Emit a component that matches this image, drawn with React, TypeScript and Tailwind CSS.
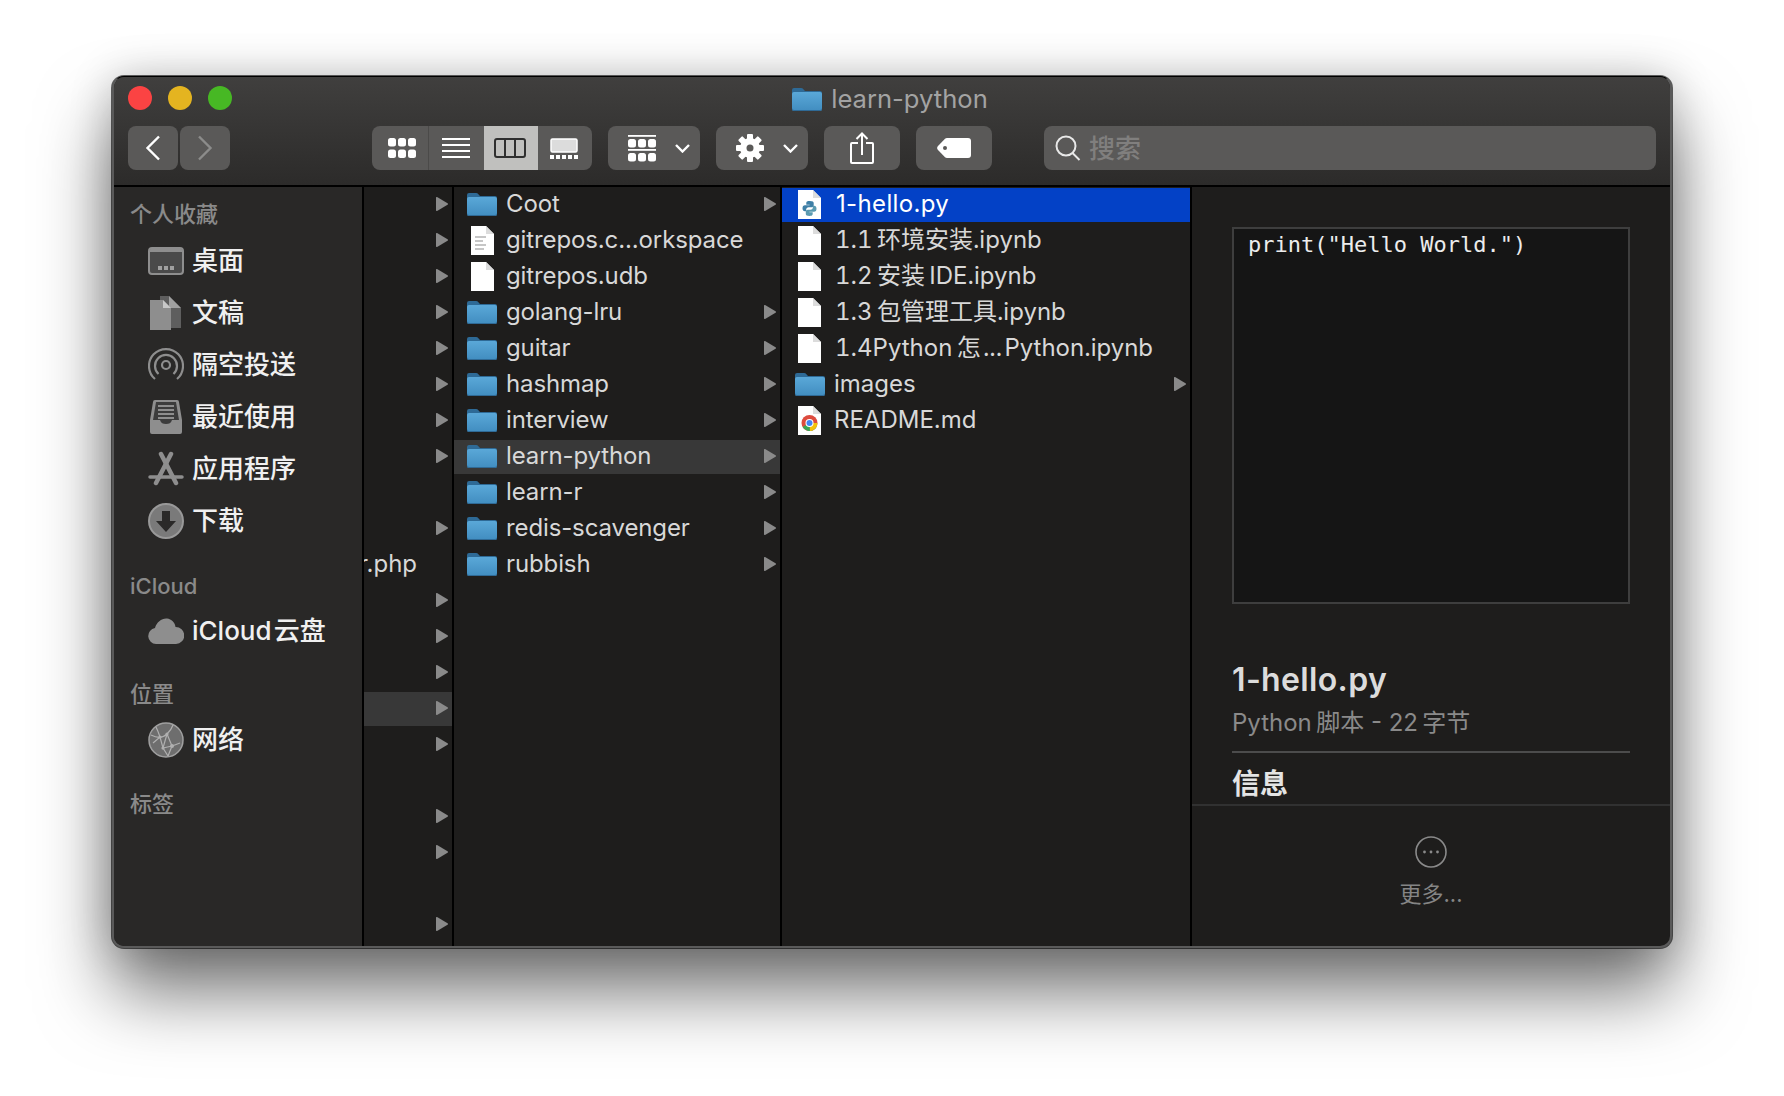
import type { ReactNode } from "react";

function Folder() {
  return (
    <svg width="30" height="24" viewBox="0 0 30 24" className="shrink-0">
      <defs>
        <linearGradient id="folderBody" x1="0" y1="0" x2="0" y2="1">
          <stop offset="0" stopColor="#5aa8d8" />
          <stop offset="1" stopColor="#418dc0" />
        </linearGradient>
      </defs>
      <path d="M0 3a2 2 0 0 1 2-2h7a3 3 0 0 1 2.4 1.2L13 4h15a2 2 0 0 1 2 2v4H0z" fill="#2e6a96" />
      <path d="M0 7a2 2 0 0 1 2-2h26a2 2 0 0 1 2 2v15a2 2 0 0 1-2 2H2a2 2 0 0 1-2-2z" fill="url(#folderBody)" />
      <path d="M0 22v-1a2 2 0 0 0 2 2h26a2 2 0 0 0 2-2v1a2 2 0 0 1-2 2H2a2 2 0 0 1-2-2z" fill="#2f6a96" />
    </svg>
  );
}

function Page({ children }: { children?: ReactNode }) {
  return (
    <svg width="23" height="29" viewBox="0 0 23 29" className="shrink-0">
      <path d="M0 0h15l8 8v21H0z" fill="#ffffff" />
      <path d="M15 0l8 8h-8z" fill="#dcdcdc" />
      {children}
    </svg>
  );
}

function DocFile() {
  return (
    <Page>
      <path d="M4 11h11M4 15h8M4 19h11M4 23h9" stroke="#b4b4b4" strokeWidth="1.4" />
    </Page>
  );
}

function PythonFile() {
  return (
    <Page>
      <path d="M11.3 11c-3 0-3 1.300-3 2.400v1.300h3.300v.6H7c-1.600 0-2.500 1.200-2.500 3s.9 3 2.400 3h1.300v-1.800c0-1.300 1.100-2.300 2.400-2.300h3.200c1.100 0 1.900-.9 1.900-2v-2.200c0-1.100-1-2-3.900-2z" fill="#3f7fa6" />
      <path d="M11.700 26c3 0 3-1.300 3-2.400v-1.300h-3.300v-.6H16c1.600 0 2.500-1.200 2.500-3s-.9-3-2.400-3h-1.300v1.800c0 1.300-1.100 2.300-2.400 2.300H9.700c-1.100 0-1.900.9-1.900 2v2.200c0 1.100 1 2 3.900 2z" fill="#5b9ab0" />
    </Page>
  );
}

function ChromeFile() {
  return (
    <Page>
      <circle cx="11.500" cy="17" r="8" fill="#dd4b3e" />
      <path d="M11.500 17L4.600 21a8 8 0 0 0 10.900 2.900 8 8 0 0 0 3-2.900z" fill="#3aa757" />
      <path d="M11.500 17h8a8 8 0 0 1-4 6.900 8 8 0 0 1-3.500 1.100z" fill="#f4c20d" />
      <circle cx="11.500" cy="17" r="4" fill="#ffffff" />
      <circle cx="11.500" cy="17" r="3" fill="#4285f4" />
    </Page>
  );
}

function Arrow() {
  return (
    <svg width="12" height="14" viewBox="0 0 12 14" className="shrink-0">
      <path d="M0 1v12a1 1 0 0 0 1.500.8l10-6a1 1 0 0 0 0-1.600l-10-6A1 1 0 0 0 0 1z" fill="#8a8a8a" />
    </svg>
  );
}

function Chevron() {
  return (
    <svg width="15" height="9" viewBox="0 0 15 9" className="shrink-0">
      <path d="M1 1l6.500 6.500L14 1" fill="none" stroke="#ffffff" strokeWidth="2.400" />
    </svg>
  );
}

function DesktopIcon() {
  return (
    <svg width="36" height="36" viewBox="0 0 36 36">
      <rect x="1" y="5" width="34" height="26" rx="3" fill="#4a4a4a" stroke="#8e8e8e" strokeWidth="2" />
      <path d="M2 7a2 2 0 0 1 2-2h28a2 2 0 0 1 2 2v2H2z" fill="#8e8e8e" />
      <rect x="10" y="23" width="4" height="4" fill="#a0a0a0" />
      <rect x="16" y="23" width="4" height="4" fill="#a0a0a0" />
      <rect x="22" y="23" width="4" height="4" fill="#a0a0a0" />
    </svg>
  );
}

function DocsIcon() {
  return (
    <svg width="36" height="36" viewBox="0 0 36 36">
      <path d="M12 1h9l12 12v20H12z" fill="#5e5e5e" />
      <path d="M21 1l12 12H21z" fill="#a0a0a0" />
      <path d="M2 5h13l8 8v22H2z" fill="#8e8e8e" />
      <path d="M15 5l8 8h-8z" fill="#c8c8c8" />
    </svg>
  );
}

function AirdropIcon() {
  return (
    <svg width="36" height="36" viewBox="0 0 36 36" fill="none" stroke="#8e8e8e" strokeWidth="2.200">
      <path d="M7 32a17 17 0 1 1 22 0" />
      <path d="M10.500 27a11 11 0 1 1 15 0" />
      <circle cx="18" cy="18" r="4" />
    </svg>
  );
}

function RecentsIcon() {
  return (
    <svg width="36" height="36" viewBox="0 0 36 36">
      <path d="M7 1h22a2 2 0 0 1 2 2l3 18v12a2 2 0 0 1-2 2H4a2 2 0 0 1-2-2V21L5 3a2 2 0 0 1 2-2z" fill="#8e8e8e" />
      <path d="M8 3h20l3 18h-7c-1 3-3 4-6 4s-5-1-6-4H5z" fill="#3c3c3c" />
      <path d="M10 7h16M10 11h16M10 15h16M10 19h16" stroke="#8e8e8e" strokeWidth="2" />
    </svg>
  );
}

function AppsIcon() {
  return (
    <svg width="36" height="36" viewBox="0 0 36 36" fill="none" stroke="#8e8e8e" strokeLinecap="round">
      <path d="M13 3l15 29" strokeWidth="4.500" />
      <path d="M23 3L8 32" strokeWidth="4.500" />
      <path d="M2 26h32" strokeWidth="3.500" />
    </svg>
  );
}

function DownloadIcon() {
  return (
    <svg width="36" height="36" viewBox="0 0 36 36">
      <circle cx="18" cy="18" r="17" fill="#7a7a7a" stroke="#999999" strokeWidth="2" />
      <path d="M14 8h8v10h6L18 29 8 18h6z" fill="#2a2928" />
    </svg>
  );
}

function CloudIcon() {
  return (
    <svg width="36" height="26" viewBox="0 0 36 26">
      <path d="M8 26a8 8 0 0 1-1-15.900C8.500 4 14 0 19 .500c4.500.5 8 4 8.500 8.500A8.500 8.500 0 0 1 28 26z" fill="#8e8e8e" />
    </svg>
  );
}

function NetworkIcon() {
  return (
    <svg width="36" height="36" viewBox="0 0 36 36">
      <circle cx="18" cy="18" r="17" fill="#6e6e6e" stroke="#a0a0a0" strokeWidth="1.500" />
      <g fill="none" stroke="#b0b0b0" strokeWidth="1.200">
        <path d="M3 13c6 3 12 3 16-1 3-3 5-6 6-9" />
        <path d="M19 12l-4 14-3-11-7 6" />
        <path d="M19 12l5 12 8-3" />
        <path d="M15 26l9-2-4 10" />
        <path d="M15 26l5 8" />
        <path d="M8 5c2 4 3 7 4 10" />
      </g>
      <g fill="#b0b0b0">
        <circle cx="19" cy="12" r="1.600" />
        <circle cx="15" cy="26" r="1.600" />
        <circle cx="24" cy="24" r="2" />
        <circle cx="12" cy="15" r="1.600" />
      </g>
    </svg>
  );
}

function SectionHeader({ label, className }: { label: string; className: string }) {
  return (
    <div className={`h-[28px] pl-[16px] flex items-center text-[22px] font-medium text-[#8a8a8a] ${className}`}>{label}</div>
  );
}

function SideRow({ icon, label, className = "" }: { icon: ReactNode; label: string; className?: string }) {
  return (
    <div className={`h-[52px] pl-[34px] flex items-center text-[26px] font-medium text-[#f0f0f0] ${className}`}>
      <div className="w-[36px] h-[36px] flex items-center justify-center">{icon}</div>
      <span className="ml-[8px] mb-[2px] whitespace-nowrap">{label}</span>
    </div>
  );
}

// second column is only arrows, the names are scrolled out of view
const parentRows = [
  "arrow", "arrow", "arrow", "arrow", "arrow", "arrow", "arrow", "arrow", "",
  "arrow", "php", "arrow", "arrow", "arrow", "selected", "arrow", "", "arrow", "arrow", "", "arrow",
];

const repoRows = [
  { name: "Coot", kind: "folder" },
  { name: "gitrepos.c...orkspace", kind: "doc" },
  { name: "gitrepos.udb", kind: "file" },
  { name: "golang-lru", kind: "folder" },
  { name: "guitar", kind: "folder" },
  { name: "hashmap", kind: "folder" },
  { name: "interview", kind: "folder" },
  { name: "learn-python", kind: "folder", active: true },
  { name: "learn-r", kind: "folder" },
  { name: "redis-scavenger", kind: "folder" },
  { name: "rubbish", kind: "folder" },
];

const pythonRows = [
  { name: "1.1\u2009环境安装.ipynb" },
  { name: "1.2\u2009安装\u2009IDE.ipynb" },
  { name: "1.3\u2009包管理工具.ipynb" },
  { name: "1.4Python\u2009怎\u200a...\u200aPython.ipynb" },
];

export default function App() {
  return (
    <div className="h-[1096px] w-[1784px] overflow-hidden bg-white pt-[76px] pl-[112px] font-[Inter,'Noto_Sans_CJK_SC',sans-serif]">
      <div className="w-[1560px] h-[872px] flex flex-col overflow-hidden rounded-[12px] border-x-2 border-b-2 border-t border-x-[#5a5a5a] border-b-[#5a5a5a] border-t-black bg-[#1e1d1c] shadow-[0_44px_72px_rgba(0,0,0,0.55),0_0_44px_rgba(0,0,0,0.2),0_0_0_1px_rgba(0,0,0,0.6)]">
        {/* toolbar */}
        <div className="h-[110px] shrink-0 border-b-2 border-black bg-gradient-to-b from-[#403f3e] to-[#2c2b2a]">
          <div className="h-[42px] pl-[14px] grid grid-cols-[1fr_auto_1fr] items-center">
            <div className="flex gap-[16px]">
              <div className="w-[24px] h-[24px] rounded-full bg-[#fb4343]" />
              <div className="w-[24px] h-[24px] rounded-full bg-[#e4b420]" />
              <div className="w-[24px] h-[24px] rounded-full bg-[#47b824]" />
            </div>
            <div className="flex items-center gap-[9px] text-[25.6px] text-[#a3a3a3] pr-[18px] pt-[2px]">
              <Folder />
              <span>learn-python</span>
            </div>
            <div />
          </div>
          <div className="mt-[7px] h-[44px] px-[14px] flex">
            <div className="w-[50px] rounded-[8px] bg-[#5a5958] flex items-center justify-center">
              <svg width="16" height="26" viewBox="0 0 16 26" fill="none" stroke="#ffffff" strokeWidth="2.400">
                <path d="M14 1.500L2.500 13 14 24.500" />
              </svg>
            </div>
            <div className="ml-[2px] w-[50px] rounded-[8px] bg-[#5a5958] flex items-center justify-center">
              <svg width="16" height="26" viewBox="0 0 16 26" fill="none" stroke="#8c8c8b" strokeWidth="2.400">
                <path d="M2 1.500L13.500 13 2 24.500" />
              </svg>
            </div>

            <div className="ml-[142px] w-[220px] flex rounded-[8px] overflow-hidden bg-[#5a5958]">
              <div className="w-[57px] pl-[3px] border-r border-[#4b4a49] flex items-center justify-center">
                <svg width="28" height="20" viewBox="0 0 28 20" fill="#ffffff">
                  <rect x="0" y="0" width="8" height="8.500" rx="2.500" />
                  <rect x="10" y="0" width="8" height="8.500" rx="2.500" />
                  <rect x="20" y="0" width="8" height="8.500" rx="2.500" />
                  <rect x="0" y="11.500" width="8" height="8.500" rx="2.500" />
                  <rect x="10" y="11.500" width="8" height="8.500" rx="2.500" />
                  <rect x="20" y="11.500" width="8" height="8.500" rx="2.500" />
                </svg>
              </div>
              <div className="w-[55px] pr-[2px] flex items-center justify-center">
                <svg width="28" height="20" viewBox="0 0 28 20" stroke="#ffffff" strokeWidth="1.800">
                  <path d="M0 1h28M0 7h28M0 13h28M0 19h28" />
                </svg>
              </div>
              <div className="w-[54px] pr-[2px] bg-[#c0c0be] flex items-center justify-center">
                <svg width="32" height="20" viewBox="0 0 32 20" fill="none" stroke="#2f2f2f" strokeWidth="2">
                  <rect x="1" y="1" width="30" height="18" rx="2" />
                  <path d="M11 1v18M21 1v18" />
                </svg>
              </div>
              <div className="w-[54px] pr-[2px] flex items-center justify-center">
                <svg width="28" height="21" viewBox="0 0 28 21">
                  <rect x="1" y="1" width="26" height="13" rx="1.500" fill="#dcdcdc" stroke="#ffffff" strokeWidth="1.500" />
                  <g fill="#ffffff">
                    <rect x="0" y="17" width="4" height="4" />
                    <rect x="6" y="17" width="4" height="4" />
                    <rect x="12" y="17" width="4" height="4" />
                    <rect x="18" y="17" width="4" height="4" />
                    <rect x="24" y="17" width="4" height="4" />
                  </g>
                </svg>
              </div>
            </div>

            <div className="ml-[16px] w-[92px] rounded-[8px] bg-[#5a5958] flex items-center pl-[20px]">
              <svg width="28" height="27" viewBox="0 0 28 27" fill="#ffffff" className="shrink-0">
                <rect x="0" y="0" width="28" height="1.800" />
                <rect x="0" y="4" width="8" height="8.500" rx="2.500" />
                <rect x="10" y="4" width="8" height="8.500" rx="2.500" />
                <rect x="20" y="4" width="8" height="8.500" rx="2.500" />
                <rect x="0" y="14" width="28" height="1.800" />
                <rect x="0" y="18" width="8" height="8.500" rx="2.500" />
                <rect x="10" y="18" width="8" height="8.500" rx="2.500" />
                <rect x="20" y="18" width="8" height="8.500" rx="2.500" />
              </svg>
              <div className="ml-[19px]">
                <Chevron />
              </div>
            </div>

            <div className="ml-[16px] w-[92px] rounded-[8px] bg-[#5a5958] flex items-center pl-[20px]">
              <svg width="28" height="28" viewBox="0 0 28 28" fill="#ffffff" className="shrink-0">
                <g>
                  {[0, 45, 90, 135, 180, 225, 270, 315].map((a) => (
                    <rect key={a} x="11" y="0" width="6" height="8" rx="1" transform={`rotate(${a} 14 14)`} />
                  ))}
                </g>
                <circle cx="14" cy="14" r="10" />
                <circle cx="14" cy="14" r="3.500" fill="#5a5958" />
              </svg>
              <div className="ml-[19px]">
                <Chevron />
              </div>
            </div>

            <div className="ml-[16px] w-[76px] rounded-[8px] bg-[#5a5958] flex items-center justify-center">
              <svg width="24" height="32" viewBox="0 0 24 32" fill="none" stroke="#ffffff" strokeWidth="2">
                <path d="M8 11H2a1 1 0 0 0-1 1v18a1 1 0 0 0 1 1h20a1 1 0 0 0 1-1V12a1 1 0 0 0-1-1h-6" />
                <path d="M12 23V2M6.500 7L12 1.500 17.500 7" />
              </svg>
            </div>

            <div className="ml-[16px] w-[76px] rounded-[8px] bg-[#5a5958] flex items-center justify-center">
              <svg width="34" height="20" viewBox="0 0 34 20">
                <path d="M10 0h21a3 3 0 0 1 3 3v14a3 3 0 0 1-3 3H10a3 3 0 0 1-2-.8L1 12a3 3 0 0 1 0-4l7-7.200A3 3 0 0 1 10 0z" fill="#ffffff" />
                <circle cx="8" cy="10" r="2" fill="#5a5958" />
              </svg>
            </div>

            <div className="ml-[52px] flex-1 rounded-[8px] bg-[#5a5958] flex items-center pl-[11px]">
              <svg width="26" height="26" viewBox="0 0 26 26" fill="none" stroke="#e8e8e8" strokeWidth="2" className="shrink-0">
                <circle cx="11" cy="11" r="9.500" />
                <path d="M17.500 18l7 7" />
              </svg>
              <span className="ml-[8px] text-[26px] font-medium text-[#807f7e]">搜索</span>
            </div>
          </div>
        </div>

        <div className="flex-1 min-h-0 flex">
          {/* sidebar */}
          <div className="w-[250px] shrink-0 border-r-2 border-black bg-[#292827]">
            <SectionHeader label="个人收藏" className="mt-[13px]" />
            <SideRow icon={<DesktopIcon />} label="桌面" className="mt-[7px]" />
            <SideRow icon={<DocsIcon />} label="文稿" />
            <SideRow icon={<AirdropIcon />} label="隔空投送" />
            <SideRow icon={<RecentsIcon />} label="最近使用" />
            <SideRow icon={<AppsIcon />} label="应用程序" />
            <SideRow icon={<DownloadIcon />} label="下载" />
            <SectionHeader label="iCloud" className="mt-[25px]" />
            <SideRow icon={<CloudIcon />} label={"iCloud\u200a云盘"} className="mt-[5px]" />
            <SectionHeader label="位置" className="mt-[23px]" />
            <SideRow icon={<NetworkIcon />} label="网络" className="mt-[6px]" />
            <SectionHeader label="标签" className="mt-[24px]" />
          </div>

          {/* parent column */}
          <div className="w-[90px] shrink-0 border-r-2 border-black pt-px">
            {parentRows.map((r, i) => (
              <div
                key={i}
                className={`h-[34px] mb-[2px] pr-[4px] pb-[2px] flex items-center justify-end overflow-hidden ${r === "selected" ? "bg-[#383838]" : ""}`}
              >
                {r === "php" ? <span className="mr-auto -ml-[5px] text-[24px] text-[#d8d8d8] whitespace-nowrap">r.php</span> : null}
                {r === "arrow" || r === "selected" ? <Arrow /> : null}
              </div>
            ))}
          </div>

          {/* repo column */}
          <div className="w-[328px] shrink-0 border-r-2 border-black pt-px">
            {repoRows.map((r) => (
              <div
                key={r.name}
                className={`h-[34px] mb-[2px] pl-[13px] pr-[4px] pb-[2px] flex items-center text-[24px] text-[#d8d8d8] ${r.active ? "bg-[#383838]" : ""}`}
              >
                <div className="w-[30px] flex justify-center shrink-0">
                  {r.kind === "folder" ? <Folder /> : r.kind === "doc" ? <DocFile /> : <Page />}
                </div>
                <span className="ml-[9px] whitespace-nowrap tracking-[-0.12px]">{r.name}</span>
                {r.kind === "folder" ? (
                  <div className="ml-auto">
                    <Arrow />
                  </div>
                ) : null}
              </div>
            ))}
          </div>

          {/* file column */}
          <div className="w-[410px] shrink-0 border-r-2 border-black pt-px">
            <div className="h-[34px] mb-[2px] pl-[16px] pb-[2px] flex items-center text-[24px] text-white bg-[#0341c6]">
              <PythonFile />
              <span className="ml-[15px] whitespace-nowrap tracking-[0.35px]">1-hello.py</span>
            </div>
            {pythonRows.map((r) => (
              <div key={r.name} className="h-[34px] mb-[2px] pl-[16px] pb-[2px] flex items-center text-[24px] text-[#d8d8d8]">
                <Page />
                <span className="ml-[14px] whitespace-nowrap tabular-nums">{r.name}</span>
              </div>
            ))}
            <div className="h-[34px] mb-[2px] pl-[13px] pr-[4px] pb-[2px] flex items-center text-[24px] text-[#d8d8d8]">
              <Folder />
              <span className="ml-[9px]">images</span>
              <div className="ml-auto">
                <Arrow />
              </div>
            </div>
            <div className="h-[34px] mb-[2px] pl-[16px] pb-[2px] flex items-center text-[24px] text-[#d8d8d8]">
              <ChromeFile />
              <span className="ml-[13px]">README.md</span>
            </div>
          </div>

          {/* preview */}
          <div className="flex-1 min-w-0">
            <div className="pl-[40px] pr-[40px] pt-[40px]">
              <div className="h-[377px] border-2 border-[#3e3e3e] bg-[#151515] pl-[14px] pt-[1px] text-[22px] leading-[30px] text-[#ececec] font-['DejaVu_Sans_Mono',monospace]">
                print("Hello World.")
              </div>
              <div className="mt-[56px] h-[40px] flex items-center text-[32px] font-semibold tracking-[0.35px] text-[#dcdcdc]">1-hello.py</div>
              <div className="mt-[7px] h-[32px] flex items-center text-[24px] text-[#8a8a8a]">{"Python\u2009脚本 - 22\u2009字节"}</div>
              <div className="mt-[12px] h-[2px] bg-[#4c4c4c]" />
              <div className="mt-[13px] h-[36px] flex items-center text-[28px] font-semibold text-[#e4e4e4]">信息</div>
            </div>
            <div className="mt-[2px] h-[2px] bg-[#313131]" />
            <div className="mt-[30px] flex flex-col items-center">
              <svg width="32" height="32" viewBox="0 0 32 32" fill="none">
                <circle cx="16" cy="16" r="15" stroke="#8a8a8a" strokeWidth="1.600" />
                <circle cx="9.500" cy="16" r="1.400" fill="#8a8a8a" />
                <circle cx="16" cy="16" r="1.400" fill="#8a8a8a" />
                <circle cx="22.500" cy="16" r="1.400" fill="#8a8a8a" />
              </svg>
              <div className="mt-[12px] h-[28px] flex items-center text-[22px] text-[#858585]">更多...</div>
            </div>
          </div>
        </div>
      </div>
    </div>
  );
}
